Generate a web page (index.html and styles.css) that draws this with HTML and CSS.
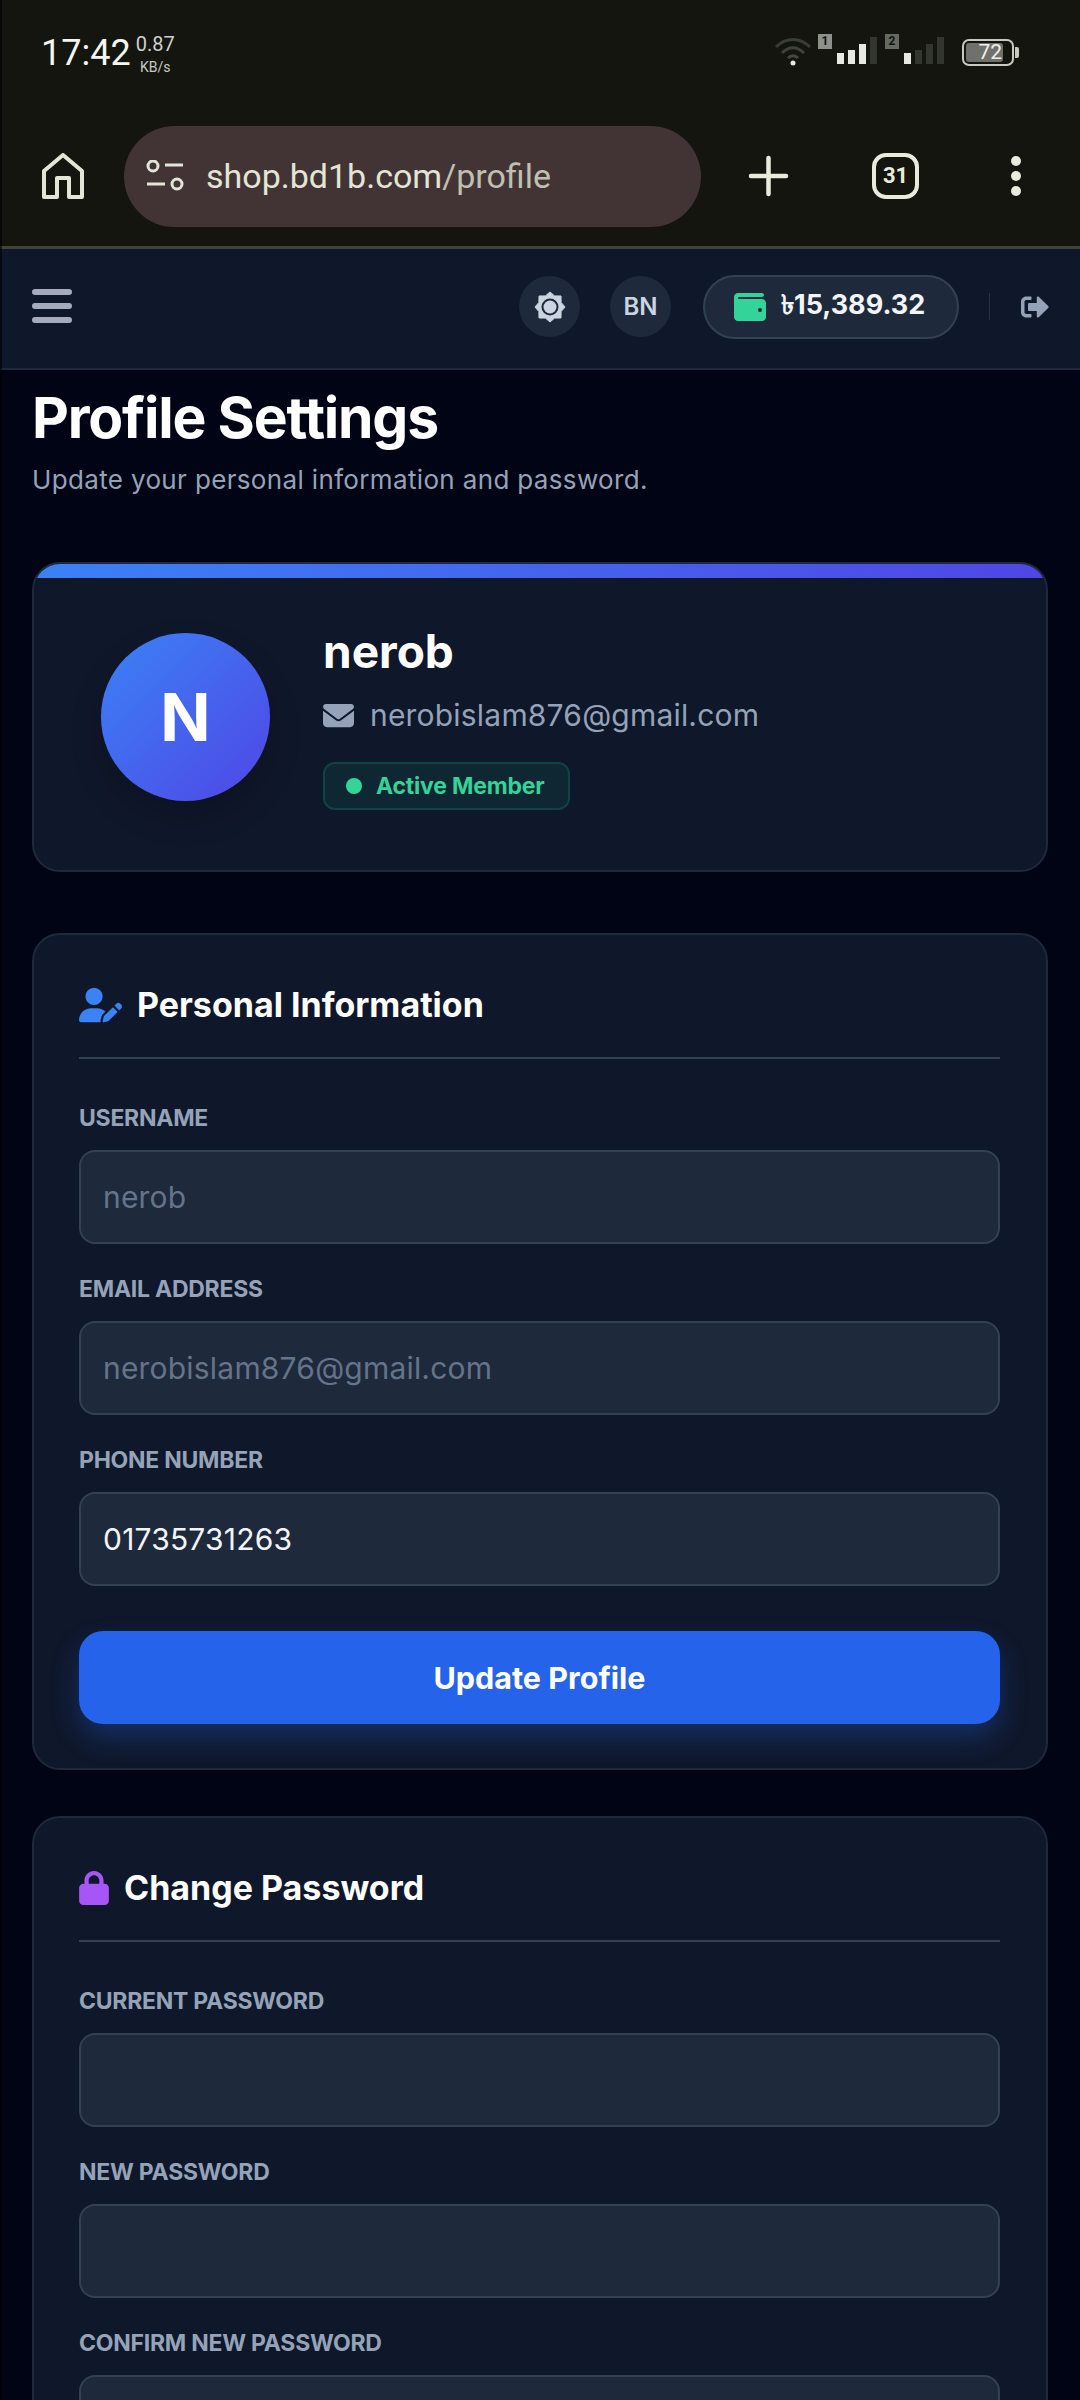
FILE: index.html
```html
<!DOCTYPE html>
<html lang="en">
<head>
<meta charset="utf-8">
<title>Profile Settings</title>
<link rel="stylesheet" href="styles.css">
</head>
<body>
<div class="chrome">
  <div class="statusbar">
    <div class="clock"><span class="time">17:42</span><span class="speed"><b>0.87</b><i>KB/s</i></span></div>
    <div class="sysicons">
      <svg class="wifi" viewBox="0 0 38 30" width="38" height="30"><path d="M2 11C12 1 26 1 36 11" fill="none" stroke="#3a3d37" stroke-width="3"/><path d="M8 17C15 10 23 10 30 17" fill="none" stroke="#3f423b" stroke-width="3"/><path d="M14 22C17 19 21 19 24 22" fill="none" stroke="#45483f" stroke-width="3"/><circle cx="19" cy="27" r="2.500" fill="#e8e8e0"/></svg>
      <div class="sim"><span class="simtag">1</span><svg viewBox="0 0 40 27" width="40" height="27"><rect x="0" y="16" width="7" height="11" fill="#e8e8e2"/><rect x="11" y="13" width="7" height="14" fill="#e8e8e2"/><rect x="22" y="7" width="7" height="20" fill="#e8e8e2"/><rect x="33" y="0" width="7" height="27" fill="#33362f"/></svg></div>
      <div class="sim"><span class="simtag dim">2</span><svg viewBox="0 0 40 27" width="40" height="27"><rect x="0" y="16" width="7" height="11" fill="#e8e8e2"/><rect x="11" y="13" width="7" height="14" fill="#33362f"/><rect x="22" y="7" width="7" height="20" fill="#33362f"/><rect x="33" y="0" width="7" height="27" fill="#33362f"/></svg></div>
      <div class="battery"><span class="batlevel">72</span></div>
    </div>
  </div>
  <div class="toolbar">
    <svg class="home" viewBox="0 0 42 46" width="42" height="46"><path d="M2 44V18L21 2L40 18V44H27V25H15V44Z" fill="none" stroke="#e3e5d6" stroke-width="4" stroke-linejoin="round"/></svg>
    <div class="urlbar">
      <svg viewBox="0 0 38 32" width="38" height="32"><circle cx="7" cy="6" r="5" fill="none" stroke="#e3e5d6" stroke-width="3"/><path d="M19 5H37M1 24H19" stroke="#e3e5d6" stroke-width="3" fill="none"/><circle cx="31" cy="24" r="5" fill="none" stroke="#e3e5d6" stroke-width="3"/></svg>
      <span class="url">shop.bd1b.com<em>/profile</em></span>
    </div>
    <svg class="plus" viewBox="0 0 41 42" width="41" height="42"><path d="M20.500 3V39M3 21H38" stroke="#e9ebdc" stroke-width="4.500" stroke-linecap="round" fill="none"/></svg>
    <div class="tabs">31</div>
    <div class="menu"><span></span><span></span><span></span></div>
  </div>
</div>
<header class="topbar">
  <div class="burger"><span></span><span></span><span></span></div>
  <div class="top-actions">
    <div class="round">
      <svg viewBox="0 0 32 32" width="32" height="32"><polygon fill="#cbd5e1" stroke="#cbd5e1" stroke-linejoin="round" points="16,1 20.600,4.900 27,5 27.100,11.400 31,16 27.100,20.600 27,27 20.600,27.100 16,31 11.400,27.100 5,27 4.900,20.600 1,16 4.900,11.400 5,5 11.400,4.900"/><circle cx="16" cy="16" r="8.500" fill="#1e293b"/><circle cx="16" cy="16" r="6.500" fill="#cbd5e1"/></svg>
    </div>
    <div class="round lang">BN</div>
    <div class="balance">
      <svg viewBox="0 0 512 512" width="32" height="32"><path fill="#34d399" d="M64 32C28.700 32 0 60.700 0 96V416c0 35.300 28.700 64 64 64H448c35.300 0 64-28.700 64-64V192c0-35.300-28.700-64-64-64H80c-8.800 0-16-7.200-16-16s7.200-16 16-16H448c17.700 0 32-14.300 32-32s-14.300-32-32-32H64zM416 272a32 32 0 1 1 0 64 32 32 0 1 1 0-64z"/></svg>
      <span>৳15,389.32</span>
    </div>
    <div class="sep"></div>
    <svg class="logout" viewBox="0 0 512 512" width="28" height="28"><path fill="#94a3b8" d="M497 273L329 441c-15 15-41 4.500-41-17v-96H152c-13.300 0-24-10.700-24-24v-96c0-13.300 10.700-24 24-24h136V88c0-21.400 25.900-32 41-17l168 168c9.300 9.400 9.300 24.600 0 34zM192 436v-40c0-6.600-5.400-12-12-12H96c-17.700 0-32-14.300-32-32V160c0-17.700 14.300-32 32-32h84c6.600 0 12-5.400 12-12V76c0-6.600-5.400-12-12-12H96c-53 0-96 43-96 96v192c0 53 43 96 96 96h84c6.600 0 12-5.400 12-12z"/></svg>
  </div>
</header>
<main class="page">
  <h1>Profile Settings</h1>
  <p class="sub">Update your personal information and password.</p>

  <section class="card profile">
    <div class="avatar">N</div>
    <div class="who">
      <div class="name">nerob</div>
      <div class="mail">
        <svg viewBox="0 0 512 512" width="31" height="31"><path fill="#94a3b8" d="M48 64C21.500 64 0 85.500 0 112c0 15.100 7.100 29.300 19.200 38.400L236.800 313.600c11.400 8.500 27 8.500 38.400 0L492.800 150.400c12.100-9.100 19.200-23.300 19.200-38.400 0-26.500-21.500-48-48-48H48zM0 176V384c0 35.300 28.700 64 64 64H448c35.300 0 64-28.700 64-64V176L294.400 339.200c-22.800 17.100-54 17.100-76.800 0L0 176z"/></svg>
        <span>nerobislam876@gmail.com</span>
      </div>
      <div class="badge"><i></i>Active Member</div>
    </div>
  </section>

  <section class="card form">
    <h2>
      <svg viewBox="0 0 640 512" width="43" height="36"><path fill="#3b82f6" d="M224 256A128 128 0 1 0 224 0a128 128 0 1 0 0 256zm-45.700 48C79.800 304 0 383.800 0 482.300C0 498.700 13.300 512 29.700 512H322.800c-3.100-8.800-3.700-18.400-1.400-27.800l15-60.100c2.800-11.300 8.600-21.500 16.800-29.700l40.300-40.300c-32.100-31-75.700-50.100-123.900-50.100H178.300zm435.500-68.300c-15.600-15.600-40.900-15.600-56.600 0l-29.400 29.400 71 71 29.400-29.400c15.600-15.600 15.600-40.900 0-56.600l-14.400-14.400zM375.900 417c-4.100 4.100-7 9.200-8.400 14.900l-15 60.100c-1.400 5.500 .2 11.200 4.200 15.200s9.700 5.600 15.200 4.200l60.100-15c5.600-1.400 10.800-4.300 14.900-8.400L576.100 358.700l-71-71L375.900 417z"/></svg>
      Personal Information
    </h2>
    <div class="field">
      <label>USERNAME</label>
      <div class="input muted">nerob</div>
    </div>
    <div class="field">
      <label>EMAIL ADDRESS</label>
      <div class="input muted">nerobislam876@gmail.com</div>
    </div>
    <div class="field">
      <label>PHONE NUMBER</label>
      <div class="input">01735731263</div>
    </div>
    <button class="primary">Update Profile</button>
  </section>

  <section class="card form">
    <h2>
      <svg viewBox="0 0 448 512" width="30" height="34"><path fill="#a855f7" d="M144 144v48H304V144c0-44.200-35.800-80-80-80s-80 35.800-80 80zM80 192V144C80 64.500 144.500 0 224 0s144 64.500 144 144v48h16c35.300 0 64 28.700 64 64V448c0 35.300-28.700 64-64 64H64c-35.300 0-64-28.700-64-64V256c0-35.300 28.700-64 64-64H80z"/></svg>
      Change Password
    </h2>
    <div class="field">
      <label>CURRENT PASSWORD</label>
      <div class="input"></div>
    </div>
    <div class="field">
      <label>NEW PASSWORD</label>
      <div class="input"></div>
    </div>
    <div class="field">
      <label>CONFIRM NEW PASSWORD</label>
      <div class="input"></div>
    </div>
  </section>
</main>
</body>
</html>
```
FILE: styles.css
```css
* { box-sizing: border-box; }
html, body { margin: 0; padding: 0; }
body {
  position: relative;
  width: 1080px;
  height: 2400px;
  overflow: hidden;
  background: #010414;
  font-family: Inter, "Noto Sans", sans-serif;
  color: #fff;
}
body::after { content: ""; position: absolute; left: 0; top: 0; bottom: 0; width: 2px; background: rgba(0,0,0,.6); }
.chrome { height: 249px; background: #13150e; border-bottom: 3px solid #3f4436; }
.statusbar { height: 106px; display: flex; justify-content: space-between; padding: 32px 66px 0 41px; }
.clock { display: flex; align-items: flex-start; font-family: Roboto, sans-serif; color: #f4f4f0; }
.time { font-size: 36px; line-height: 42px; }
.speed { display: flex; flex-direction: column; align-items: center; margin: 2px 0 0 5px; }
.speed b { font-weight: 400; font-size: 20px; line-height: 20px; color: #cfd0ca; }
.speed i { font-style: normal; font-size: 14px; line-height: 14px; margin-top: 6px; color: #c8c9c3; }
.sysicons { display: flex; align-items: flex-start; gap: 8px; }
.wifi { margin: 4px -2px 0 0; }
.sim { position: relative; width: 59px; height: 30px; margin-top: 2px; display: flex; align-items: flex-end; justify-content: flex-end; }
.simtag { position: absolute; left: 0; top: 0; width: 14px; height: 15px; background: #8e908a; color: #13150e; font: 700 12px/15px Roboto, sans-serif; text-align: center; }
.simtag.dim { background: #666862; }
.battery { position: relative; width: 52px; height: 27px; margin: 7px 0 0 10px; padding: 2px; border: 2px solid #c8c9c0; border-radius: 7px; }
.battery::after { content: ""; position: absolute; right: -7px; top: 6px; width: 4px; height: 11px; background: #c8c9c0; border-radius: 0 2px 2px 0; }
.batlevel { display: block; height: 100%; width: 37px; background: #70716c; border-radius: 3px; color: #f0f0ea; font: 400 21px/19px Roboto, sans-serif; text-align: right; padding-right: 1px; }
.toolbar { display: flex; align-items: center; height: 140px; padding-left: 42px; }
.home { flex: none; }
.urlbar { width: 577px; height: 101px; margin-left: 40px; border-radius: 51px; background: #423434; display: flex; align-items: center; padding-left: 22px; gap: 22px; flex: none; }
.url { font: 400 34px/44px Roboto, sans-serif; color: #e3e5d6; }
.url em { font-style: normal; color: #bfc0b2; }
.plus { margin-left: 47px; flex: none; }
.tabs { width: 47px; height: 46px; margin-left: 83px; border: 4.500px solid #e9ebdc; border-radius: 14px; font: 700 22px/37px Roboto, sans-serif; text-align: center; color: #e9ebdc; flex: none; }
.menu { margin-left: 92px; display: flex; flex-direction: column; gap: 5px; flex: none; }
.menu span { display: block; width: 10px; height: 10px; border-radius: 50%; background: #e9ebdc; }
.topbar { height: 121px; background: #0f172a; border-bottom: 2px solid #1e293b; display: flex; align-items: center; justify-content: space-between; padding: 0 31px 4px 32px; }
.burger { display: flex; flex-direction: column; gap: 8px; width: 40px; margin-top: -2px; }
.burger span { height: 6px; background: #a4abbd; border-radius: 3px; }
.top-actions { display: flex; align-items: center; }
.round { width: 61px; height: 61px; border-radius: 50%; background: #1e293b; display: flex; align-items: center; justify-content: center; margin-right: 30px; font-weight: 600; font-size: 24px; color: #cbd5e1; }
.round.lang { margin-right: 32px; }
.balance { display: flex; align-items: center; height: 64px; width: 256px; padding-left: 29px; gap: 15px; border-radius: 32px; background: #1e293b; border: 2px solid #334155; font-weight: 700; font-size: 27px; color: #f1f5f9; }
.sep { width: 1px; height: 27px; background: #263244; margin: 0 31px 0 30px; }
.page { padding: 16px 32px 0; }
h1 { margin: 0; font-size: 57px; line-height: 64px; font-weight: 700; letter-spacing: -1.200px; }
.sub { margin: 12px 0 0; font-size: 26px; line-height: 36px; color: #94a3b8; letter-spacing: .35px; }
.card { background: #0f172a; border: 2px solid #1e293b; border-radius: 28px; }
.profile { position: relative; overflow: hidden; height: 310px; margin-top: 64px; display: flex; align-items: center; gap: 53px; padding-left: 67px; }
.profile::before { content: ""; position: absolute; left: -2px; right: -2px; top: -2px; height: 16px; background: linear-gradient(90deg, #3b82f6, #4f46e5); }
.avatar { width: 169px; height: 168px; border-radius: 50%; background: linear-gradient(135deg, #3b82f6, #4f46e5); box-shadow: 0 16px 32px rgba(0,0,0,.2); display: flex; align-items: center; justify-content: center; font-size: 66px; font-weight: 700; flex: none; }
.who { display: flex; flex-direction: column; }
.name { font-size: 46px; line-height: 54px; font-weight: 700; }
.mail { display: flex; align-items: center; gap: 16px; margin-top: 17px; font-size: 30px; line-height: 40px; color: #94a3b8; letter-spacing: .2px; }
.badge { display: inline-flex; align-self: flex-start; align-items: center; gap: 14px; margin-top: 27px; height: 48px; width: 247px; padding-left: 21px; border-radius: 12px; background: rgba(16,185,129,.1); border: 2px solid rgba(16,185,129,.2); color: #34d399; font-size: 23px; font-weight: 700; letter-spacing: -.2px; }
.badge i { width: 16px; height: 16px; border-radius: 50%; background: #34d399; }
.form { margin-top: 61px; padding: 48px 46px 44px 45px; }
.form + .form { margin-top: 46px; }
h2 { display: flex; align-items: center; gap: 15px; margin: 0; height: 76px; padding-bottom: 30px; border-bottom: 2px solid #334155; font-size: 34px; line-height: 44px; font-weight: 700; }
.field { margin-top: 45px; }
.field + .field { margin-top: 31px; }
label { display: block; font-size: 23px; line-height: 28px; font-weight: 700; color: #94a3b8; letter-spacing: -.25px; }
.input { height: 94px; margin-top: 18px; background: #1e293b; border: 2px solid #334155; border-radius: 16px; padding: 0 22px; display: flex; align-items: center; font-size: 30px; color: #f1f5f9; letter-spacing: .2px; }
.input.muted { color: #64748b; }
.primary { display: block; width: 100%; height: 93px; margin-top: 45px; border: 0; border-radius: 24px; background: #2563eb; box-shadow: 0 14px 28px rgba(37,99,235,.3); color: #fff; font: 700 30.500px Inter, sans-serif; }
```
